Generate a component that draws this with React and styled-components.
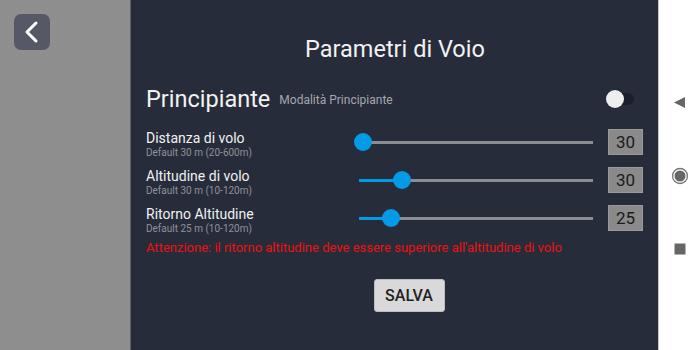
import styled, { createGlobalStyle } from 'styled-components';

const GlobalStyle = createGlobalStyle`
  html, body {
    margin: 0;
    padding: 0;
    font-family: Roboto, "Noto Sans", sans-serif;
  }
`;

const rows = [
  { label: 'Distanza di volo', hint: 'Default 30 m (20-600m)', value: 30, min: 20, max: 600 },
  { label: 'Altitudine di volo', hint: 'Default 30 m (10-120m)', value: 30, min: 10, max: 120 },
  { label: 'Ritorno Altitudine', hint: 'Default 25 m (10-120m)', value: 25, min: 10, max: 120 },
];

function Slider({ value, min, max }) {
  const pct = ((value - min) / (max - min)) * 100;
  return (
    <STrack>
      <SActive style={{ width: `${pct}%` }} />
      <SThumb style={{ left: `${pct}%` }} />
    </STrack>
  );
}

function BackIcon() {
  return (
    <svg width="36" height="36" viewBox="0 0 36 36">
      <path d="M22 9 L13 18 L22 27" fill="none" stroke="#fff" strokeWidth="3" strokeLinecap="round" strokeLinejoin="round" />
    </svg>
  );
}

function App() {
  return (
    <>
      <GlobalStyle />
      <SScreen>
        <SSide>
          <SBackButton>
            <BackIcon />
          </SBackButton>
        </SSide>
        <SMain>
          <STitle>Parametri di Voio</STitle>
          <SModeRow>
            <SModeName>Principiante</SModeName>
            <SModeHint>Modalità Principiante</SModeHint>
            <SToggle>
              <SToggleThumb />
            </SToggle>
          </SModeRow>
          <SRows>
            {rows.map((r) => (
              <SRow key={r.label}>
                <SLabelBox>
                  <SLabel>{r.label}</SLabel>
                  <SHint>{r.hint}</SHint>
                </SLabelBox>
                <Slider value={r.value} min={r.min} max={r.max} />
                <SValue>{r.value}</SValue>
              </SRow>
            ))}
          </SRows>
          <SWarning>Attenzione: il ritorno altitudine deve essere superiore all'altitudine di volo</SWarning>
          <SButtonBar>
            <SSave>SALVA</SSave>
          </SButtonBar>
        </SMain>
        <SNav>
          <svg width="12" height="12" viewBox="0 0 12 12">
            <polygon points="11,0 11,11 0,5.5" fill="#666" />
          </svg>
          <svg width="18" height="18" viewBox="0 0 18 18">
            <circle cx="9" cy="9" r="7.5" fill="none" stroke="#777" strokeWidth="1.3" />
            <circle cx="9" cy="9" r="5.5" fill="#666" />
          </svg>
          <svg width="12" height="12" viewBox="0 0 12 12">
            <rect x="0.5" y="0.5" width="11" height="11" fill="#666" />
          </svg>
        </SNav>
      </SScreen>
    </>
  );
}

const SScreen = styled.div`
  display: flex;
  width: 700px;
  height: 350px;
  overflow: hidden;
`;

const SSide = styled.div`
  width: 131px;
  flex-shrink: 0;
  background: #8e8e8e;
  border-right: 1px solid #5c5f66;
  padding: 14px;
  box-sizing: border-box;
`;

const SBackButton = styled.div`
  width: 36px;
  height: 36px;
  border-radius: 7px;
  background: #545965;
  display: flex;
  align-items: center;
  justify-content: center;
`;

const SMain = styled.div`
  flex: 1;
  background: #272c3a;
  display: flex;
  flex-direction: column;
  padding: 36px 14px 0 15px;
  box-sizing: border-box;
`;

const STitle = styled.div`
  color: #f2f2f2;
  font-size: 23.5px;
  line-height: 26px;
  text-align: center;
`;

const SModeRow = styled.div`
  display: flex;
  align-items: center;
  height: 30px;
  margin-top: 22px;
`;

const SModeName = styled.div`
  color: #f2f2f2;
  font-size: 23.5px;
  line-height: 30px;
`;

const SModeHint = styled.div`
  color: #a4a7ae;
  font-size: 12px;
  margin-left: 9px;
  flex: 1;
  padding-top: 2px;
`;

const SToggle = styled.div`
  position: relative;
  width: 28px;
  height: 12px;
  border-radius: 6px;
  background: #1b1f29;
  margin-right: 10px;
`;

const SToggleThumb = styled.div`
  position: absolute;
  left: 0;
  top: -3px;
  width: 18px;
  height: 18px;
  border-radius: 50%;
  background: #eeeeee;
`;

const SRows = styled.div`
  display: flex;
  flex-direction: column;
  gap: 12px;
  margin-top: 15px;
`;

const SRow = styled.div`
  display: grid;
  grid-template-columns: 198px 234px 35px;
  grid-template-rows: 26px;
  align-items: center;
  column-gap: 15px;
  height: 26px;
`;

const SLabelBox = styled.div`
  display: flex;
  flex-direction: column;
  padding-top: 4px;
`;

const SLabel = styled.div`
  color: #f0f0f0;
  font-size: 14px;
  line-height: 17px;
`;

const SHint = styled.div`
  color: #8f929a;
  font-size: 10px;
  line-height: 12px;
`;

const STrack = styled.div`
  position: relative;
  height: 3px;
  background: #8a8d94;
`;

const SActive = styled.div`
  position: absolute;
  left: 0;
  top: 0;
  height: 100%;
  background: #039be5;
`;

const SThumb = styled.div`
  position: absolute;
  top: 50%;
  width: 18px;
  height: 18px;
  border-radius: 50%;
  background: #039be5;
  transform: translate(-50%, -50%);
`;

const SValue = styled.div`
  height: 26px;
  background: #8a8a8a;
  border: 1px solid #9a9a9a;
  box-sizing: border-box;
  color: #1a1a1a;
  font-size: 17px;
  display: flex;
  align-items: center;
  justify-content: center;
`;

const SWarning = styled.div`
  color: #ee1111;
  font-size: 13px;
  line-height: 16px;
  margin-top: 9px;
`;

const SButtonBar = styled.div`
  display: flex;
  justify-content: center;
  padding-left: 28px;
  margin-top: 23px;
`;

const SSave = styled.button`
  width: 71px;
  height: 33px;
  background: #d9d9d9;
  border: 1px solid #bdbdbd;
  border-radius: 3px;
  color: #222;
  font-family: Roboto, sans-serif;
  font-size: 16px;
  font-weight: 500;
  padding: 0;
`;

const SNav = styled.div`
  width: 42px;
  flex-shrink: 0;
  background: #fff;
  border-left: 1px solid #c8c8c8;
  box-sizing: border-box;
  display: flex;
  flex-direction: column;
  align-items: center;
  padding-top: 97px;
  gap: 58px;
`;

export default App;
